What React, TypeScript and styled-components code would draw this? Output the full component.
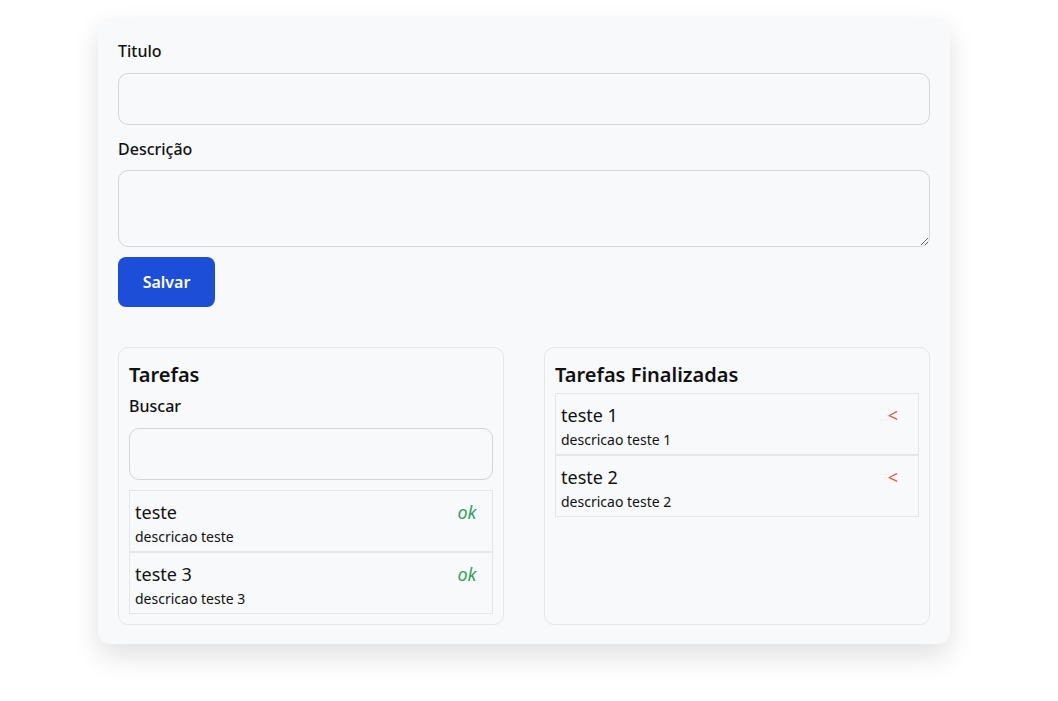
import React from "react";
import styled, { createGlobalStyle } from "styled-components";

const GlobalStyle = createGlobalStyle`
  html, body { margin: 0; padding: 0; background: #ffffff; }
  body { font-family: "Noto Sans", "Open Sans", sans-serif; color: #111111; }
  * { box-sizing: border-box; }
`;

const Page = styled.div`
  padding: 18px 0 40px 98px;
`;

const Card = styled.main`
  width: 852px;
  background: #f8f9fb;
  border-radius: 12px;
  box-shadow: 0 12px 28px rgba(0, 0, 0, 0.12);
  padding: 21px 20px 19px;
  display: flex;
  flex-direction: column;
`;

const Form = styled.form`
  display: flex;
  flex-direction: column;
`;

const Label = styled.label<{ $top?: number; $bottom?: number }>`
  display: block;
  font-size: 16px;
  font-weight: 500;
  line-height: 24px;
  margin-top: ${(p) => p.$top ?? 0}px;
  margin-bottom: ${(p) => p.$bottom ?? 10}px;
`;

const Input = styled.input`
  display: block;
  width: 100%;
  height: 52px;
  border: 1px solid #d3d5dc;
  border-radius: 10px;
  background: #f8f9fb;
  padding: 0 12px;
  font: inherit;
`;

const TextArea = styled.textarea`
  display: block;
  width: 100%;
  height: 77px;
  border: 1px solid #d3d5dc;
  border-radius: 10px;
  background: #f8f9fb;
  padding: 8px 12px;
  font: inherit;
`;

const SaveButton = styled.button`
  align-self: flex-start;
  margin-top: 10px;
  height: 50px;
  width: 97px;
  border: none;
  border-radius: 8px;
  background: #1d4ed8;
  color: #ffffff;
  font-family: inherit;
  font-size: 16px;
  font-weight: 600;
`;

const Columns = styled.div`
  margin-top: 40px;
  display: grid;
  grid-template-columns: 1fr 1fr;
  column-gap: 40px;
`;

const Panel = styled.section`
  border: 1px solid #e4e6ea;
  border-radius: 10px;
  padding: 11px 10px 10px;
  display: flex;
  flex-direction: column;
  min-height: 278px;
`;

const PanelTitle = styled.h2`
  margin: 0;
  padding-top: 2px;
  font-size: 20px;
  font-weight: 600;
  line-height: 28px;
`;

const SearchLabel = styled.label`
  display: block;
  margin-top: 5px;
  margin-bottom: 10px;
  font-size: 16px;
  font-weight: 500;
  line-height: 24px;
`;

const List = styled.ul<{ $top: number }>`
  list-style: none;
  margin: ${(p) => p.$top}px 0 0;
  padding: 0;
`;

const Item = styled.li`
  border: 1px solid #e4e6ea;
  padding: 8px 7px 4px 5px;
`;

const ItemRow = styled.div`
  display: flex;
  align-items: center;
  justify-content: space-between;
`;

const ItemTitle = styled.span`
  font-size: 18px;
  line-height: 27px;
`;

const ItemDesc = styled.div`
  font-size: 14px;
  line-height: 21px;
`;

const ActionButton = styled.button<{ $kind: "ok" | "back" }>`
  width: 36px;
  padding: 0;
  border: none;
  background: transparent;
  font-family: inherit;
  font-size: 18px;
  line-height: 27px;
  font-style: ${(p) => (p.$kind === "ok" ? "italic" : "normal")};
  color: ${(p) => (p.$kind === "ok" ? "#35a062" : "#e8553c")};
  text-align: center;
`;

type Task = { title: string; desc: string };

const pending: Task[] = [
  { title: "teste", desc: "descricao teste" },
  { title: "teste 3", desc: "descricao teste 3" },
];

const done: Task[] = [
  { title: "teste 1", desc: "descricao teste 1" },
  { title: "teste 2", desc: "descricao teste 2" },
];

function TaskItem({ task, kind }: { task: Task; kind: "ok" | "back" }) {
  return (
    <Item>
      <ItemRow>
        <ItemTitle>{task.title}</ItemTitle>
        <ActionButton $kind={kind}>{kind === "ok" ? "ok" : "<"}</ActionButton>
      </ItemRow>
      <ItemDesc>{task.desc}</ItemDesc>
    </Item>
  );
}

export default function App() {
  return (
    <>
      <GlobalStyle />
      <Page>
        <Card>
          <Form onSubmit={(e) => e.preventDefault()}>
            <Label htmlFor="titulo">Titulo</Label>
            <Input id="titulo" />
            <Label htmlFor="descricao" $top={12} $bottom={9}>
              Descrição
            </Label>
            <TextArea id="descricao" />
            <SaveButton type="submit">Salvar</SaveButton>
          </Form>
          <Columns>
            <Panel>
              <PanelTitle>Tarefas</PanelTitle>
              <SearchLabel htmlFor="buscar">Buscar</SearchLabel>
              <Input id="buscar" />
              <List $top={10}>
                {pending.map((t) => (
                  <TaskItem key={t.title} task={t} kind="ok" />
                ))}
              </List>
            </Panel>
            <Panel>
              <PanelTitle>Tarefas Finalizadas</PanelTitle>
              <List $top={4}>
                {done.map((t) => (
                  <TaskItem key={t.title} task={t} kind="back" />
                ))}
              </List>
            </Panel>
          </Columns>
        </Card>
      </Page>
    </>
  );
}
